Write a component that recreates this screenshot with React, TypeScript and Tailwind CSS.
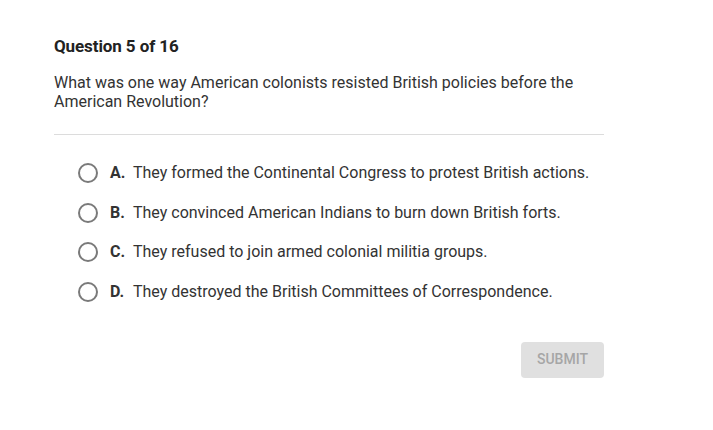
import React from 'react';

const options = [
  { letter: 'A.', text: 'They formed the Continental Congress to protest British actions.' },
  { letter: 'B.', text: 'They convinced American Indians to burn down British forts.' },
  { letter: 'C.', text: 'They refused to join armed colonial militia groups.' },
  { letter: 'D.', text: 'They destroyed the British Committees of Correspondence.' },
];

export default function App() {
  return (
    <div className="w-[713px] h-[430px] bg-white font-['Roboto',sans-serif] text-[#333]">
      <div className="w-[550px] ml-[54px] pt-[35px]">
        <h1 className="text-[17px] leading-[22px] font-bold tracking-[-0.1px] text-[#222]">Question 5 of 16</h1>
        <p className="mt-[16px] text-[16px] leading-[19px]">
          What was one way American colonists resisted British policies before the American Revolution?
        </p>
        <div className="mt-[23px] border-t border-[#dcdcdc]" />
        <ul className="mt-[28px] pl-[24px] flex flex-col gap-[19.5px]">
          {options.map((o) => (
            <li key={o.letter} className="flex items-center h-[20px]">
              <span className="w-[20px] h-[20px] rounded-full border-2 border-[#7a7a7a] shrink-0" />
              <span className="ml-[12px] w-[23px] text-[16px] font-bold text-[#333]">{o.letter}</span>
              <span className="text-[16px]">{o.text}</span>
            </li>
          ))}
        </ul>
        <div className="mt-[40px] flex justify-end">
          <button className="w-[83px] h-[36px] rounded bg-[#e0e0e0] text-[14px] font-medium text-[#a6a6a6]">
            SUBMIT
          </button>
        </div>
      </div>
    </div>
  );
}
